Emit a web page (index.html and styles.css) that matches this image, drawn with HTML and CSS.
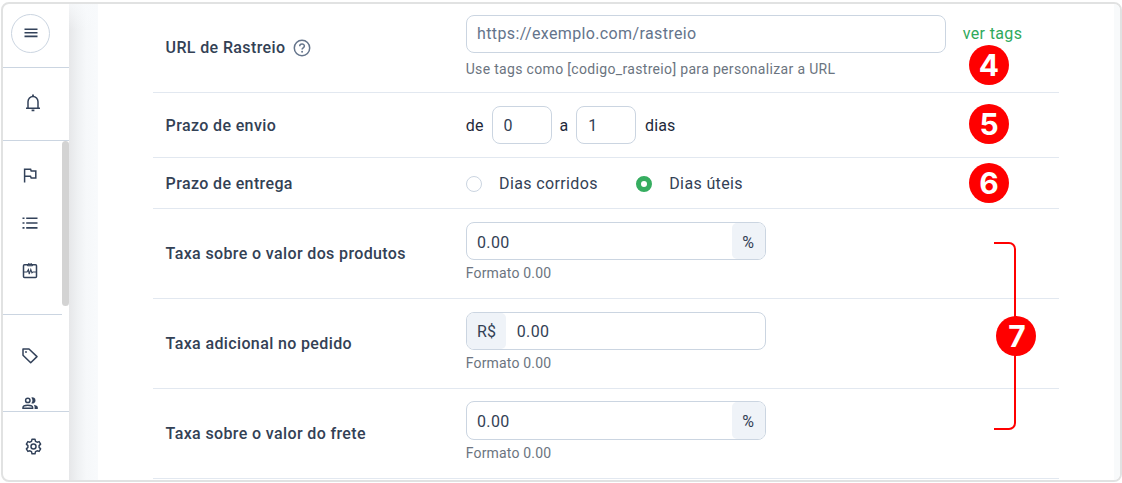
FILE: index.html
```html
<!DOCTYPE html>
<html lang="pt-BR">
<head>
<meta charset="utf-8">
<title>Configuração de envio</title>
<link rel="stylesheet" href="styles.css">
</head>
<body>
<div class="frame">
  <aside class="sidebar">
    <div class="side-menu">
      <button class="menu-button" aria-label="Menu">
        <svg width="14" height="10" viewBox="0 0 14 10"><path d="M.5 1.2h13M.5 4.8h13M.5 8.4h13" stroke="#33425a" stroke-width="1.6"/></svg>
      </button>
    </div>
    <div class="side-bell">
      <svg class="icon" width="18" height="18" viewBox="0 0 18 18"><path d="M2 14.2h14M4 14V7.8a5 5.4 0 0 1 10 0V14"/><path d="M9 .6v2M7.6 16.4h2.8" stroke-width="1.8"/></svg>
    </div>
    <nav class="side-scroll">
      <div class="side-main">
        <svg class="icon" width="16" height="16" viewBox="0 0 16 16"><path d="M2.6 15.5V2.2h6l.6 1.9h4.6v7H9.2l-.7-1.8H2.6"/></svg>
        <svg class="icon" width="16" height="16" viewBox="0 0 16 16"><path d="M4.2 3.2h11.3M4.2 8h11.3M4.2 12.9h11.3M.5 3.2h2M.5 8h2M.5 12.9h2" stroke-width="1.6"/></svg>
        <svg class="icon" width="16" height="16" viewBox="0 0 16 16"><rect x="1.5" y="1.7" width="13" height="12.8" rx="1"/><path d="M5.5 1.8 6.4.6a2.2 2.2 0 0 1 3.2 0l.9 1.2v1h-5z" stroke-width="1"/><path d="M1.5 9H5l1.4-2.4.8 4.6 1.6-4.8 1.1 3.4 1-.8h3.5" stroke-width="1.1"/></svg>
      </div>
      <div class="side-more">
        <svg class="icon" width="16" height="16" viewBox="0 0 16 16"><path d="M1 1h6l8 7.6-6.3 6.2L1 7.2z" stroke-linejoin="round"/><circle cx="4" cy="4" r=".9" fill="#33425a" stroke="none"/></svg>
        <svg class="icon people" width="16" height="16" viewBox="0 0 16 16"><circle cx="5.8" cy="4.4" r="2.2"/><path d="M1 12.2v-.7c0-3 9.6-3 9.6 0v.7z" stroke-width="1.5"/><path d="M9.3 1.5a3.1 3.1 0 1 1 0 5.8 4.7 4.7 0 0 0 0-5.8zM11.7 8.7c2.6.4 4.1 1.4 4.1 2.6v1.6h-3.2v-1.8c0-.9-.3-1.7-.9-2.4z" fill="#33425a" stroke="none"/></svg>
      </div>
      <span class="scrollbar"></span>
    </nav>
    <div class="side-settings">
      <svg class="icon" width="17" height="17" viewBox="0 0 17 17"><path d="M7 1.2h3l.5 2.1 1.6.9 2-.6 1.5 2.5-1.5 1.5v1.8l1.5 1.5-1.5 2.5-2-.6-1.6.9-.5 2.1H7l-.5-2.1-1.6-.9-2 .6-1.5-2.5 1.5-1.5V7.6L1.4 6.1l1.5-2.5 2 .6 1.6-.9z" stroke-linejoin="round"/><circle cx="8.5" cy="8.5" r="2.5"/></svg>
    </div>
  </aside>
  <div class="gutter"></div>
  <main class="content">
    <section class="row row-url">
      <div class="label">URL de Rastreio
        <svg class="help" width="18" height="18" viewBox="0 0 18 18"><circle cx="9" cy="9" r="7.7" stroke-width="1.5"/><path d="M6.7 7.2c0-2.9 4.7-2.9 4.7-.1 0 1.7-2.3 1.7-2.3 3.3" stroke-width="1.5"/><circle cx="9.1" cy="12.7" r=".95" fill="#64748b" stroke="none"/></svg>
      </div>
      <div class="field">
        <div class="line"><input class="input url" type="text" placeholder="https://exemplo.com/rastreio"><a class="link">ver tags</a></div>
        <p class="hint">Use tags como [codigo_rastreio] para personalizar a URL</p>
      </div>
    </section>
    <section class="row row-send">
      <div class="label">Prazo de envio</div>
      <div class="field range"><span>de</span><input class="input small" value="0"><span>a</span><input class="input small" value="1"><span class="unit">dias</span></div>
    </section>
    <section class="row row-delivery">
      <div class="label">Prazo de entrega</div>
      <div class="field options">
        <label class="option first"><i class="radio"></i>Dias corridos</label>
        <label class="option"><i class="radio checked"></i>Dias úteis</label>
      </div>
    </section>
    <section class="row row-fee">
      <div class="label">Taxa sobre o valor dos produtos</div>
      <div class="field">
        <div class="group low"><span class="value">0.00</span><span class="addon">%</span></div>
        <p class="hint">Formato 0.00</p>
      </div>
    </section>
    <section class="row row-fee">
      <div class="label">Taxa adicional no pedido</div>
      <div class="field">
        <div class="group"><span class="addon prefix">R$</span><span class="value">0.00</span></div>
        <p class="hint">Formato 0.00</p>
      </div>
    </section>
    <section class="row row-fee last">
      <div class="label">Taxa sobre o valor do frete</div>
      <div class="field">
        <div class="group low"><span class="value">0.00</span><span class="addon">%</span></div>
        <p class="hint">Formato 0.00</p>
      </div>
    </section>
  </main>
  <div class="edge"></div>
</div>
<div class="bracket"></div>
<span class="badge badge-4">4</span>
<span class="badge badge-5">5</span>
<span class="badge badge-6">6</span>
<span class="badge badge-7">7</span>
</body>
</html>
```
FILE: styles.css
```css
* { box-sizing: border-box; }
body {
  margin: 0;
  padding: 2px 0 0 1px;
  height: 483px;
  overflow: hidden;
  position: relative;
  background: #fff;
  font: 16px/24px Roboto, sans-serif;
  letter-spacing: .37px;
  color: #334155;
}
p { margin: 0; }
svg { display: block; flex: none; }
.frame {
  display: flex;
  width: 1121px;
  height: 480px;
  border: 2px solid #e1e2e2;
  border-radius: 8px;
  overflow: hidden;
}
.sidebar { width: 66px; flex: none; display: flex; flex-direction: column; }
.icon { fill: none; stroke: #33425a; stroke-width: 1.5; }
.side-menu { height: 64px; border-bottom: 1px solid #cbd5e1; padding: 10px 0 0 8px; }
.menu-button {
  display: grid;
  place-items: center;
  width: 39px;
  height: 39px;
  padding: 0 0 2px;
  border: 1px solid #cbd5e1;
  border-radius: 50%;
  background: #fff;
}
.side-bell { height: 73px; border-bottom: 1px solid #cbd5e1; padding: 26px 0 0 21px; }
.side-scroll { position: relative; height: 271px; border-bottom: 1px solid #cbd5e1; overflow: hidden; }
.side-main {
  width: 59px;
  height: 174px;
  border-bottom: 1px solid #cbd5e1;
  padding: 26px 0 0 19px;
  display: flex;
  flex-direction: column;
  gap: 32px;
}
.side-more { padding: 33px 0 0 19px; display: flex; flex-direction: column; gap: 32px; }
.scrollbar {
  position: absolute;
  top: 0;
  right: 0;
  width: 7px;
  height: 165px;
  border-radius: 4px;
  background: #d3d3d3;
}
.side-settings { padding: 26px 0 0 22px; }
.gutter {
  width: 29px;
  flex: none;
  background:
    linear-gradient(180deg, rgba(248, 250, 252, .8), rgba(248, 250, 252, 0) 26px),
    linear-gradient(90deg, #e6e7e9, #eff1f3 30%, #f6f8fa 60%, #f8fafc);
}
.content { width: 1016px; flex: none; padding: 0 55px; }
.edge { flex: 1; background: #f8fafb; }
.row { display: flex; align-items: center; width: 906px; border-bottom: 1px solid #e2e8f0; }
.row-url { height: 89px; }
.row-send { height: 65px; }
.row-delivery { height: 51px; }
.row-fee { height: 90px; }
.label {
  display: flex;
  align-items: center;
  gap: 8px;
  width: 312.7px;
  padding-left: 12.6px;
  flex: none;
  font-weight: 500;
  letter-spacing: .37px;
}
.row-send .label, .row-delivery .label, .row-delivery .options { padding-top: 2px; }
.help { fill: none; stroke: #64748b; }
.line { display: flex; align-items: center; }
.input {
  height: 38px;
  border: 1px solid #cbd5e1;
  border-radius: 8px;
  background: #fff;
  padding: 0 10px;
  font: 16px/24px Roboto, sans-serif;
  letter-spacing: .37px;
  color: #334155;
}
.input::placeholder { color: #64748b; opacity: 1; }
.url { width: 480px; padding-left: 10.4px; }
.link { margin-left: 17px; color: #2fa95b; }
.hint { color: #6b7480; font-size: 14px; line-height: 20px; letter-spacing: .33px; margin-top: 6px; }
.row-fee .hint { margin-top: 3px; letter-spacing: .18px; }
.row-url .field { margin-top: -3px; }
.range { display: flex; align-items: center; gap: 8px; color: #1e293b; letter-spacing: 0; }
.range span { padding-top: 2px; }
.range span:first-child { letter-spacing: .2px; }
.small { width: 60px; padding-left: 11px; }
.range .unit { margin-left: .6px; letter-spacing: .2px; }
.options { display: flex; }
.option { display: flex; align-items: center; gap: 17.4px; }
.first { margin-right: 38px; }
.radio { width: 16px; height: 16px; border: 1px solid #cbd5e1; border-radius: 50%; background: #fff; }
.checked { border: 5px solid #36ad60; }
.row-fee .field { margin-top: -2px; }
.last .field { margin-top: -3px; }
.group {
  display: flex;
  width: 300px;
  height: 38px;
  border: 1px solid #cbd5e1;
  border-radius: 8px;
  overflow: hidden;
  line-height: 37px;
}
.low { line-height: 39px; }
.last .group { height: 39px; line-height: 40px; }
.value { flex: 1; padding-left: 10.3px; }
.addon { width: 33px; text-align: center; letter-spacing: 0; background: #eff3f8; border-radius: 5px 0 0 5px; }
.prefix { width: 39px; padding-left: 1px; letter-spacing: .3px; border-radius: 0 5px 5px 0; }
.prefix + .value { padding-left: 11px; }
.badge {
  position: absolute;
  width: 40px;
  height: 40px;
  border-radius: 50%;
  background: #f00;
  color: #fff;
  font: 700 30px/40px Inter, sans-serif;
  letter-spacing: 0;
  text-align: center;
}
.badge-4 { left: 969px; top: 45px; }
.badge-5 { left: 969px; top: 104px; }
.badge-6 { left: 969px; top: 163px; }
.badge-7 { left: 996px; top: 316px; padding-left: 2px; }
.bracket {
  position: absolute;
  left: 994px;
  top: 242px;
  width: 22px;
  height: 188px;
  border: 2px solid #f00;
  border-left: 0;
  border-radius: 0 7px 7px 0;
}
```
